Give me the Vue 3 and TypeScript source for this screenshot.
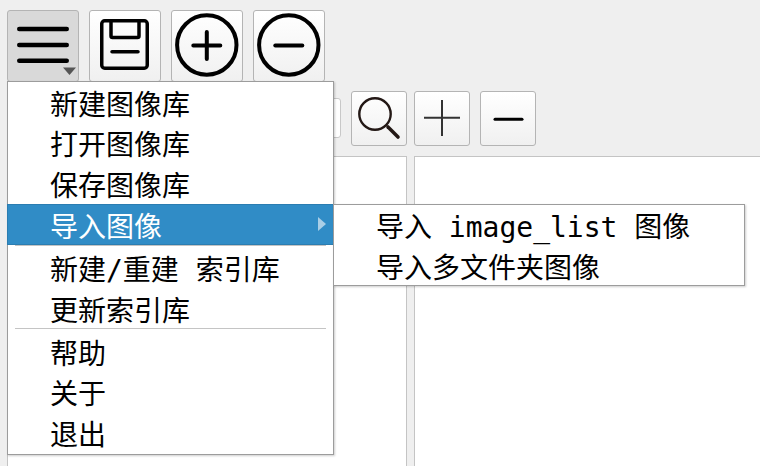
<script setup lang="ts">
interface Item { label: string; active?: boolean; sep?: boolean }
const items: Item[] = [
  { label: '新建图像库' },
  { label: '打开图像库' },
  { label: '保存图像库' },
  { label: '导入图像', active: true, sep: true },
  { label: '新建/重建 索引库' },
  { label: '更新索引库', sep: true },
  { label: '帮助' },
  { label: '关于' },
  { label: '退出' },
]
const subItems: string[] = ['导入 image_list 图像', '导入多文件夹图像']
</script>

<template>
  <div class="page">
    <div class="bar-top">
      <button class="btn big pressed">
        <svg width="70" height="70" viewBox="0 0 70 70">
          <path d="M11.250 18H58.750M11.250 34H58.750M11.250 49.700H58.750" stroke="#000" stroke-width="4.500" stroke-linecap="round" fill="none" />
          <path d="M55 56.500H68L61.500 64Z" fill="#555" />
        </svg>
      </button>
      <button class="btn big">
        <svg width="70" height="70" viewBox="0 0 70 70">
          <rect x="11.750" y="9.750" width="45.500" height="47.500" rx="3" stroke="#000" stroke-width="3.500" fill="none" />
          <path d="M21 9.750V25Q21 26.500 22.500 26.500H47.500Q49 26.500 49 25V9.750" stroke="#000" stroke-width="3.500" fill="none" />
          <path d="M22 40.700H48" stroke="#000" stroke-width="3.500" stroke-linecap="round" />
        </svg>
      </button>
      <button class="btn big">
        <svg width="70" height="70" viewBox="0 0 70 70">
          <circle cx="34.800" cy="34" r="29.700" stroke="#000" stroke-width="4" fill="none" />
          <path d="M34.800 21V48M21.300 34.500H48.300" stroke="#000" stroke-width="4" stroke-linecap="round" />
        </svg>
      </button>
      <button class="btn big">
        <svg width="70" height="70" viewBox="0 0 70 70">
          <circle cx="34.800" cy="34" r="29.700" stroke="#000" stroke-width="4" fill="none" />
          <path d="M21.300 34.500H48.300" stroke="#000" stroke-width="4" stroke-linecap="round" />
        </svg>
      </button>
    </div>

    <div class="bar-search">
      <div class="field"></div>
      <button class="btn small">
        <svg width="54" height="53" viewBox="0 0 54 53">
          <circle cx="23" cy="22" r="15.700" stroke="#231815" stroke-width="2.400" fill="none" />
          <path d="M36 35L46 45" stroke="#231815" stroke-width="3.600" stroke-linecap="round" />
        </svg>
      </button>
      <button class="btn small gap-s">
        <svg width="54" height="53" viewBox="0 0 54 53">
          <path d="M27 8V44M9 25.700H45" stroke="#333" stroke-width="2" fill="none" />
        </svg>
      </button>
      <button class="btn small gap-l">
        <svg width="54" height="53" viewBox="0 0 54 53">
          <path d="M14 27.300H41" stroke="#000" stroke-width="3" fill="none" stroke-linecap="round" />
        </svg>
      </button>
    </div>

    <div class="panels">
      <div class="panel left"></div>
      <div class="panel right"></div>
    </div>

    <div class="menu main-menu">
      <template v-for="item in items" :key="item.label">
        <div class="item" :class="{ active: item.active }">
          <span class="text">{{ item.label }}</span>
          <span v-if="item.active" class="caret"></span>
        </div>
        <div v-if="item.sep" class="sep"></div>
      </template>
    </div>

    <div class="menu sub-menu">
      <div v-for="label in subItems" :key="label" class="item">
        <span class="text">{{ label }}</span>
      </div>
    </div>
  </div>
</template>

<style>
html, body { margin: 0; background: #efefef; overflow: hidden; }
</style>

<style scoped>
.page {
  position: relative;
  width: 760px;
  height: 466px;
  background: #efefef;
  overflow: hidden;
  font-family: "DejaVu Sans Mono", "Noto Sans CJK SC", monospace;
  font-size: 28px;
  color: #000;
}
.btn {
  box-sizing: border-box;
  display: flex;
  align-items: center;
  justify-content: center;
  padding: 0;
  border: 1px solid #b4b4b4;
  border-radius: 3px;
  background: linear-gradient(#ffffff, #f0f0f0);
}
.btn.big { width: 72px; height: 72px; }
.btn.small { width: 56px; height: 55px; }
.btn.pressed { background: #d9d9d9; }
.bar-top {
  display: flex;
  gap: 10px;
  padding: 10px 0 0 7px;
}
.bar-search {
  display: flex;
  align-items: center;
  padding: 9px 0 0 0;
  margin-left: 351px;
}
.field {
  position: absolute;
  left: 301px;
  top: 98px;
  width: 40px;
  height: 40px;
  box-sizing: border-box;
  background: #fff;
  border: 1px solid #c8c8c8;
  border-radius: 3px;
}
.gap-s { margin-left: 7px; }
.gap-l { margin-left: 10px; }
.panels {
  display: flex;
  gap: 7px;
  margin-top: 10px;
  padding-left: 7px;
}
.panel {
  box-sizing: border-box;
  height: 320px;
  background: #fff;
  border: 1px solid #c4c4c4;
}
.left { width: 400px; flex: none; }
.right { width: 360px; flex: none; }
.menu {
  position: absolute;
  box-sizing: border-box;
  background: #fff;
  border: 1px solid #9c9c9c;
  box-shadow: 1px 1px 2px rgba(0, 0, 0, 0.2);
}
.main-menu { left: 7px; top: 81px; width: 327px; height: 373.500px; }
.sub-menu { left: 333px; top: 204px; width: 412px; height: 82px; z-index: 2; }
.item {
  position: relative;
  box-sizing: border-box;
  display: flex;
  align-items: center;
  height: 40.670px;
  padding: 7px 0 0 42px;
  white-space: pre;
}
.sub-menu .item { padding-top: 6px; }
.text { line-height: 34px; }
.item.active {
  margin: 0 -1px;
  padding-left: 43px;
  background: #308cc6;
  box-shadow: inset 0 0 0 1px #2b7db1;
  color: #fff;
}
.caret {
  position: absolute;
  right: 8px;
  top: 13px;
  width: 0;
  height: 0;
  border-left: 8px solid #a9cee6;
  border-top: 7px solid transparent;
  border-bottom: 7px solid transparent;
}
.sep {
  height: 2.500px;
  margin: 0 7px;
}
.sep::before {
  content: "";
  display: block;
  height: 1px;
  background: #c4c4c4;
}
</style>
